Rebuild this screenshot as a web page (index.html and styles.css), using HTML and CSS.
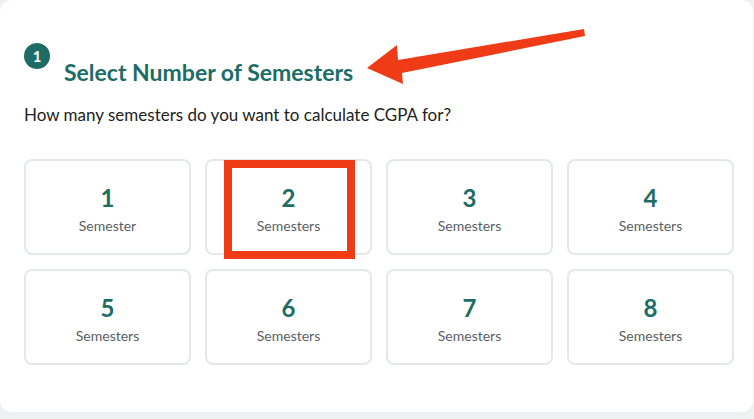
FILE: index.html
```html
<!DOCTYPE html>
<html>
<head>
<meta charset="utf-8">
<link rel="stylesheet" href="styles.css">
</head>
<body>
<div class="card">
  <div class="step">
    <span class="badge">1</span>
    <h2 class="title">Select Number of Semesters</h2>
  </div>
  <p class="subtitle">How many semesters do you want to calculate CGPA for?</p>
  <div class="grid">
    <div class="tile"><div class="num">1</div><div class="label">Semester</div></div>
    <div class="tile"><div class="num">2</div><div class="label">Semesters</div></div>
    <div class="tile"><div class="num">3</div><div class="label">Semesters</div></div>
    <div class="tile"><div class="num">4</div><div class="label">Semesters</div></div>
    <div class="tile"><div class="num">5</div><div class="label">Semesters</div></div>
    <div class="tile"><div class="num">6</div><div class="label">Semesters</div></div>
    <div class="tile"><div class="num">7</div><div class="label">Semesters</div></div>
    <div class="tile"><div class="num">8</div><div class="label">Semesters</div></div>
  </div>
  <div class="highlight"></div>
  <svg class="arrow" width="754" height="419" viewBox="0 0 754 419">
    <polygon points="584,29 585,36 402,73 403,84 367,68 397,45 398,60" fill="#ef3b16"/>
  </svg>
</div>
</body>
</html>
```

FILE: styles.css
```css
html, body {
  margin: 0;
  padding: 0;
}
body {
  background: #eef0f2;
  width: 754px;
  height: 419px;
  overflow: hidden;
  font-family: "Lato", "Open Sans", sans-serif;
}
.card {
  position: relative;
  box-sizing: border-box;
  width: 753px;
  height: 412px;
  background: #ffffff;
  border-radius: 12px;
  padding: 43px 20px 0 24px;
}
.step {
  display: flex;
  align-items: flex-start;
  gap: 14px;
}
.badge {
  flex: none;
  width: 26px;
  height: 26px;
  border-radius: 50%;
  background: #1d6d66;
  color: #ffffff;
  font-weight: 700;
  font-size: 15px;
  display: flex;
  align-items: center;
  justify-content: center;
}
.title {
  margin: 15px 0 0;
  font-size: 23px;
  line-height: 28px;
  font-weight: 700;
  color: #1d6d66;
}
.subtitle {
  margin: 18px 0 0;
  font-size: 17px;
  line-height: 22px;
  color: #222;
}
.grid {
  margin-top: 33px;
  display: grid;
  grid-template-columns: repeat(4, 167px);
  grid-auto-rows: 96px;
  gap: 14px;
}
.tile {
  box-sizing: border-box;
  border: 2px solid #e4e8ea;
  border-radius: 8px;
  display: flex;
  flex-direction: column;
  align-items: center;
  padding-top: 23px;
}
.num {
  font-size: 24px;
  line-height: 28px;
  font-weight: 700;
  color: #1d6d66;
}
.label {
  margin-top: 5px;
  font-size: 14px;
  line-height: 18px;
  color: #5a6066;
}
.highlight {
  position: absolute;
  left: 224px;
  top: 160px;
  width: 131px;
  height: 99px;
  box-sizing: border-box;
  border: 8px solid #ef3b16;
}
.arrow {
  position: absolute;
  left: 0;
  top: 0;
  pointer-events: none;
}
```
